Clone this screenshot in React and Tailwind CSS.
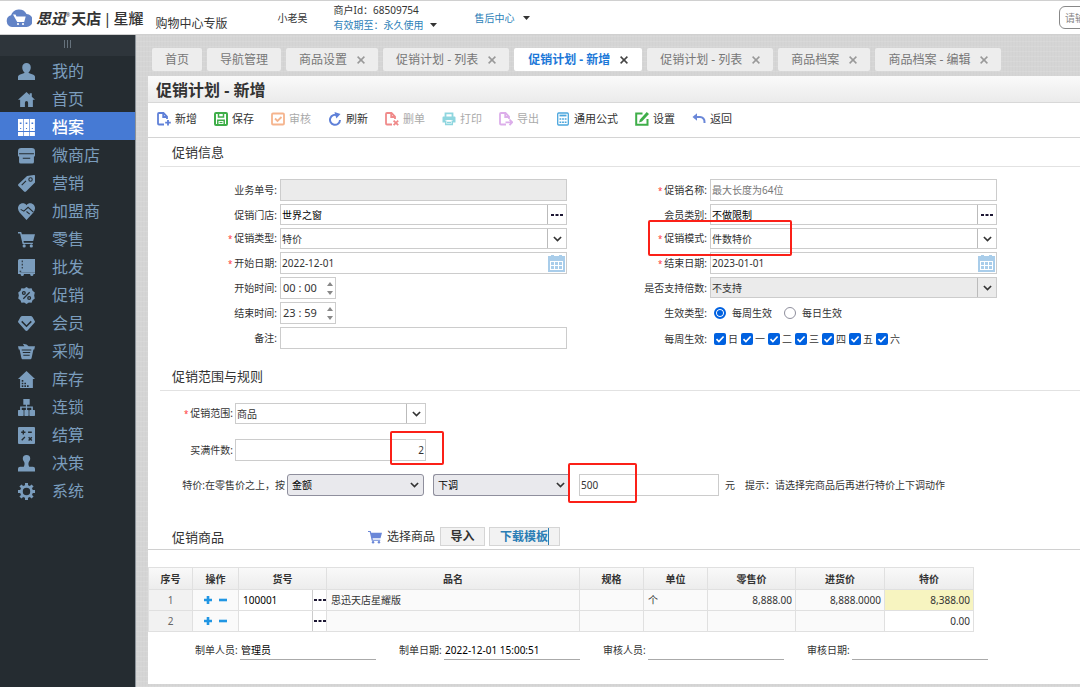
import React, { useId } from "react";

const Svg = ({ children, className = "size-[17px]", box = 16 }) => (
  <svg viewBox={`0 0 ${box} ${box}`} className={`shrink-0 ${className}`} fill="currentColor" aria-hidden="true">
    {children}
  </svg>
);

const dark = "#252c31";
const line = { fill: "none", stroke: dark, strokeWidth: 1 };

const navIcons = {
  user: (
    <path d="M8 0a4 4 0 0 1 4 4.200c0 2-.9 3.700-2 4.500v.8l4.500 1.600c1 .4 1.500 1.200 1.500 2.200V16H0v-2.700c0-1 .5-1.800 1.500-2.200L6 9.500v-.8C4.900 7.900 4 6.200 4 4.200A4 4 0 0 1 8 0z" />
  ),
  home: (
    <path d="M8 1 0 8.300h2V15h4.500v-4a1.500 1.500 0 0 1 3 0v4H14V8.300h2L13 5.500V2h-2v1.700z" />
  ),
  archive: (
    <>
      <path d="M0 0h4.900v11.300H0zM5.500 0h4.900v11.300H5.500zM11 0h4.900v11.300H11zM0 12.300h4.900V16H0zM5.500 12.300h4.900V16H5.500zM11 12.300h4.900V16H11z" />
      <path d="M1.700 4h1.600M7.200 4h1.600M12.700 4h1.600" stroke="#467ad4" strokeWidth="1.600" />
      <path d="M2 9h1M7.500 9h1M13 9h1" stroke="#467ad4" strokeWidth="1" />
    </>
  ),
  shop: (
    <>
      <path d="M3 1h10a3 3 0 0 1 3 3v2.500H0V4a3 3 0 0 1 3-3zM1 8h14v6a1.500 1.500 0 0 1-1.500 1.500h-11A1.500 1.500 0 0 1 1 14zM0 6h16v1.500a1.500 1.500 0 0 1-3 .5 2 2 0 0 1-3.300.5H6.300A2 2 0 0 1 3 8a1.500 1.500 0 0 1-3-.5z" />
      <path d="M1 6.300h14M4.500 10.500h7" {...line} />
    </>
  ),
  tag: (
    <>
      <path d="M8.500 1 15 0c.7 0 1 .3 1 1v6L7.500 15.500c-.6.6-1.200.6-1.800 0L.5 10.300c-.6-.6-.6-1.200 0-1.800z" />
      <circle cx="11.800" cy="4.200" r="1.600" {...line} />
      <path d="m3.500 9.500 4-4" {...line} />
    </>
  ),
  heart: (
    <>
      <path d="M8 2C9.500-.3 13-.5 15 1.800c1.600 2.200 1.200 5-.5 7.200L8 16 1.500 9C-.2 6.800-.6 4 1 1.800 3-.5 6.500-.3 8 2z" />
      <path d="m2.500 6 3 1.700L9.500 4l5 4.500M8 8l3 2.500" {...line} />
    </>
  ),
  cart: (
    <>
      <path d="M0 1h3l.7 2H16l-1.700 6.500H5.200l.3 1.500H14v1.300H4.300L2 2.400H0z" />
      <circle cx="5.800" cy="14" r="1.500" />
      <circle cx="12.500" cy="14" r="1.500" />
    </>
  ),
  book: (
    <>
      <path d="M1.500 0H16v13H2a2 2 0 0 0-1 .3H0V1.500A1.500 1.500 0 0 1 1.500 0zM0 13.200h16v1H0z" />
      <circle cx="4" cy="14.500" r="1.500" />
      <circle cx="13" cy="14.500" r="1.500" />
      <path d="M4 1.500V3M4 4.500V6M4 7.500V9M1.500 11.500H3" {...line} />
    </>
  ),
  percent: (
    <>
      <path d="m8 0 2.200 1.400 2.600-.2.900 2.400 2.100 1.500L15.200 8l.6 2.900-2.100 1.500-.9 2.400-2.600-.2L8 16l-2.200-1.400-2.600.2-.9-2.400L.2 10.900.8 8 .2 5.100l2.100-1.500.9-2.400 2.600.2z" />
      <g fill="none" stroke={dark} strokeWidth="1.200">
        <circle cx="5.500" cy="5.700" r="1.300" />
        <circle cx="10.500" cy="10.300" r="1.300" />
        <path d="m11 5-6 6" />
      </g>
    </>
  ),
  gem: (
    <>
      <path d="M4 1h8c.7 0 1.200.3 1.600.9L16 6c0 .5-.2.900-.5 1.200L9 14.500c-.6.6-1.400.6-2 0L.5 7.200A2 2 0 0 1 0 6l2.400-4.100C2.800 1.300 3.300 1 4 1z" />
      <path d="m3.500 6 4.500 4.500L12.500 6" fill="none" stroke={dark} strokeWidth="1.400" />
    </>
  ),
  basket: (
    <>
      <path d="M0 3h6L4.500.8l3.500.7L10 3h6l-.7 3h-.8l-1.700 8c-.2.800-.7 1.200-1.500 1.200H4.700c-.8 0-1.300-.4-1.500-1.200L1.500 6H.7z" />
      <path d="M3.500 6.500h9M4.500 9h7M5 11.500h6" {...line} />
    </>
  ),
  stock: (
    <>
      <path d="M8 0 0 7.500h2V16h12V7.500h2z" />
      <g fill={dark}>
        <path d="M3.500 8.500H5V10H3.500zM3.500 11H5v1.500H3.500zM3.500 13.500H5V15H3.500zM6 11h1.500v1.500H6zM6 13.500h1.500V15H6zM8.500 13.500H10V15H8.500z" />
      </g>
    </>
  ),
  chain: (
    <path d="M5 0h6v5.500H8.600V7H14v3.300h1.500c.3 0 .5.2.5.500V15c0 .6-.3 1-1 1h-3.500c-.5 0-.8-.3-.8-1v-4.200c0-.3.2-.5.500-.5h1.300V8.200H8.600v2.100h1c.3 0 .4.2.4.500V15c0 .7-.3 1-.8 1H6.800c-.5 0-.8-.3-.8-1v-4.200c0-.3.1-.5.400-.5h1V8.200H3.500v2.100h1.300c.3 0 .5.2.5.500V15c0 .7-.3 1-.8 1H1c-.7 0-1-.4-1-1v-4.200c0-.3.2-.5.500-.5H2V7h5.400V5.500H5z" />
  ),
  calc: (
    <>
      <rect width="16" height="16" rx="1" />
      <path d="M3 5h4M5 3v4M9.500 5H13M3.500 12.500l3-3M10 9.700l3 3M13 9.700l-3 3" fill="none" stroke={dark} strokeWidth="1.300" />
    </>
  ),
  stamp: (
    <path d="M8 0a3.500 3.500 0 0 1 3.500 3.500c0 1.500-1 2.300-1.500 3.500-.3 1-.2 2.500.5 4H14a2 2 0 0 1 2 2v2.500H0V13a2 2 0 0 1 2-2h3.500c.7-1.500.8-3 .5-4-.5-1.200-1.500-2-1.500-3.500A3.500 3.500 0 0 1 8 0z" />
  ),
  gear: (
    <>
      <circle cx="8" cy="8" r="4.800" fill="none" stroke="currentColor" strokeWidth="2.600" />
      <path d="M8 0v3M8 13v3M0 8h3M13 8h3M2.300 2.300l2 2M11.700 11.700l2 2M13.700 2.300l-2 2M4.300 11.700l-2 2" stroke="currentColor" strokeWidth="2.800" />
    </>
  ),
};

const nav = [
  ["user", "我的"],
  ["home", "首页"],
  ["archive", "档案"],
  ["shop", "微商店"],
  ["tag", "营销"],
  ["heart", "加盟商"],
  ["cart", "零售"],
  ["book", "批发"],
  ["percent", "促销"],
  ["gem", "会员"],
  ["basket", "采购"],
  ["stock", "库存"],
  ["chain", "连锁"],
  ["calc", "结算"],
  ["stamp", "决策"],
  ["gear", "系统"],
];

const tabs = [
  { label: "首页" },
  { label: "导航管理" },
  { label: "商品设置", close: true },
  { label: "促销计划 - 列表", close: true },
  { label: "促销计划 - 新增", close: true, active: true },
  { label: "促销计划 - 列表", close: true },
  { label: "商品档案", close: true },
  { label: "商品档案 - 编辑", close: true },
];

const stroke = { fill: "none", stroke: "currentColor", strokeWidth: 1.8 };
const page = <path d="M7 12.500H2a1 1 0 0 1-1-1V2a1 1 0 0 1 1-1h4.500L10 4.500V7M6.200 1v4H10" {...stroke} />;

const tools = [
  { label: "新增", tone: "text-[#5f80d8]", icon: <>{page}<path d="M11 8v5.500M8.200 10.700h5.600" {...stroke} /></> },
  {
    label: "保存",
    tone: "text-[#3fae49]",
    icon: (
      <>
        <rect x="1" y="1" width="12" height="12" rx="1" {...stroke} strokeWidth="2" />
        <path d="M4.500 1v4h5V1M3.800 13V8.300h6.400V13" {...stroke} strokeWidth="1.500" />
        <path d="M5.500 10.500h3" {...stroke} strokeWidth="1.200" />
      </>
    ),
  },
  {
    label: "审核",
    off: true,
    tone: "text-[#f5b48d]",
    icon: (
      <>
        <rect x="1" y="1.500" width="12" height="11" rx="1" {...stroke} />
        <path d="m4 6.500 2.500 2.500L10.500 5" {...stroke} />
      </>
    ),
  },
  {
    label: "刷新",
    tone: "text-[#5f80d8]",
    icon: (
      <>
        <path d="M9.500 3.500A5 5 0 1 0 12 8" {...stroke} strokeWidth="2" />
        <path d="M6.500 0 12.500 2 8.300 6.500z" />
      </>
    ),
  },
  { label: "删单", off: true, tone: "text-[#f08a8a]", icon: <>{page}<path d="m8.600 8.600 4.600 4.600M13.200 8.600l-4.600 4.600" {...stroke} /></> },
  {
    label: "打印",
    off: true,
    tone: "text-[#8fd6df]",
    icon: (
      <>
        <path d="M3.500 5V1.300h7V5" {...stroke} />
        <path d="M1.500 4.500h11a1 1 0 0 1 1 1V10.500h-2.700V8H3.200v2.500H.5v-5a1 1 0 0 1 1-1z" />
        <path d="M3.700 8.500v4h6.600v-4M5 10.500h4" {...stroke} strokeWidth="1.500" />
      </>
    ),
  },
  { label: "导出", off: true, tone: "text-[#dcaeea]", icon: <>{page}<path d="M6.500 10.300H13M10.500 7.500l2.700 2.800-2.700 2.800" {...stroke} /></> },
  {
    label: "通用公式",
    tone: "text-[#4ba6dd]",
    icon: (
      <>
        <rect x="1.700" y="1" width="10.600" height="12" rx="1" {...stroke} strokeWidth="1.300" />
        <path d="M3.500 3.500h7" {...stroke} />
        <path d="M3.500 6.200h1.800v1.500H3.500zM6.100 6.200h1.800v1.500H6.100zM8.700 6.200h1.800v1.500H8.700zM3.500 9.500h1.800V11H3.500zM6.100 9.500h1.800V11H6.100zM8.700 9.500h1.800V11H8.700z" />
      </>
    ),
  },
  {
    label: "设置",
    tone: "text-[#3fae49]",
    icon: (
      <>
        <path d="M7.500 1.500H1.200v11.300H12.500V7" {...stroke} strokeWidth="2" />
        <path d="m11.700 0 2.300 2-7 7.500-3 1 1-3z" />
      </>
    ),
  },
  {
    label: "返回",
    tone: "text-[#6a87d8]",
    icon: (
      <>
        <path d="M4 5h4a4.500 4.500 0 0 1 4.500 5v1" {...stroke} strokeWidth="2" />
        <path d="M5 1.200v7.600L.5 5z" />
      </>
    ),
  },
];

const Chevron = () => (
  <svg viewBox="0 0 10 6" className="h-[6px] w-[9px]" fill="none" stroke="#333" strokeWidth="1.800" aria-hidden="true">
    <path d="m1 .8 4 4 4-4" />
  </svg>
);

const Dots = () => (
  <svg viewBox="0 0 12 2" className="h-[2px] w-[12px]" fill="#1c1733" aria-hidden="true">
    <path d="M0 0h3v2H0zM4.500 0h3v2h-3zM9 0h3v2H9z" />
  </svg>
);

const Calendar = () => (
  <svg viewBox="0 0 17 17" className="size-[17px]" fill="none" aria-hidden="true">
    <path d="M0 1h3V0h3v1h5V0h3v1h3v16H0z" fill="#a9cdea" />
    <path d="M2 6h13v9H2z" fill="#fff" />
    <path d="M3 7h3v3H3zM7 7h3v3H7zM11 7h3v3h-3zM3 11h3v3H3zM7 11h3v3H7zM11 11h3v3h-3z" fill="#a9cdea" />
  </svg>
);

const Star = () => <span className="mr-[2px] text-[8px] text-[#f33]">*</span>;

const Mark = ({ className }) => (
  <span className={`pointer-events-none absolute z-10 rounded-[2px] border-2 border-[#fb2018] ${className}`} />
);

const box = "flex border border-[#ccc] bg-white";
const bare = "w-full min-w-0 flex-1 appearance-none bg-transparent px-px outline-none";

function Row({ label, required, height = "h-[22px]", children, id, mark }) {
  return (
    <div className={`relative flex items-center ${height}`}>
      <label htmlFor={id} className="w-[132px] shrink-0 pr-[3px] text-right">
        {required && <Star />}
        {label}:
      </label>
      <div className="flex h-full min-w-0 flex-1 items-center">{children}</div>
      {mark}
    </div>
  );
}

function TextRow({ label, required, disabled, placeholder }) {
  const id = useId();
  return (
    <Row label={label} required={required} id={id}>
      <input
        id={id}
        disabled={disabled}
        placeholder={placeholder}
        className="h-full w-full border border-[#ccc] bg-white px-px outline-none placeholder:text-[#777] disabled:bg-[#ebebeb]"
      />
    </Row>
  );
}

function PickRow({ label, value }) {
  const id = useId();
  return (
    <Row label={label} id={id} height="h-[21px]">
      <div className={`${box} h-full w-full`}>
        <input id={id} defaultValue={value} className={`${bare} text-black`} />
        <button type="button" aria-label={`选择${label}`} className="grid w-[19px] place-items-center border-l border-[#bbb]">
          <Dots />
        </button>
      </div>
    </Row>
  );
}

function Combo({ id, value, disabled }) {
  return (
    <div className={`flex h-full w-full border border-[#ccc] ${disabled ? "bg-[#ebebeb]" : "bg-white"}`}>
      <select id={id} disabled={disabled} className={`${bare} opacity-100`}>
        <option>{value}</option>
      </select>
      <span className="grid w-[19px] place-items-center border-l border-[#bbb]">
        <Chevron />
      </span>
    </div>
  );
}

function ComboRow({ label, value, required, disabled, mark }) {
  const id = useId();
  return (
    <Row label={label} required={required} id={id} height="h-[21px]" mark={mark}>
      <Combo id={id} value={value} disabled={disabled} />
    </Row>
  );
}

function DateRow({ label, value }) {
  const id = useId();
  return (
    <Row label={label} required id={id}>
      <div className={`${box} h-full w-full items-center`}>
        <input id={id} defaultValue={value} className={bare} />
        <button type="button" aria-label={`选择${label}`} className="grid w-[19px] place-items-center">
          <Calendar />
        </button>
      </div>
    </Row>
  );
}

function TimeRow({ label, value }) {
  const id = useId();
  return (
    <Row label={label} id={id}>
      <div className={`${box} h-full w-[56px]`}>
        <input id={id} defaultValue={value} className="w-[44px] bg-transparent pl-[2px] text-[11px] outline-none" />
        <span className="flex w-[10px] flex-col items-center justify-center gap-[5px] text-[#888]">
          <button type="button" aria-label="增加" className="grid h-1 place-items-center">
            <svg viewBox="0 0 6 4" className="h-[4px] w-[6px]" fill="currentColor"><path d="M0 4h6L3 0z" /></svg>
          </button>
          <button type="button" aria-label="减少" className="grid h-1 place-items-center">
            <svg viewBox="0 0 6 4" className="h-[4px] w-[6px]" fill="currentColor"><path d="M0 0h6L3 4z" /></svg>
          </button>
        </span>
      </div>
    </Row>
  );
}

const SectionTitle = ({ children }) => (
  <h2 className="ml-3 flex h-[29px] items-center border-b border-[#e2e2e2] pl-3 text-[13px]">{children}</h2>
);

const Caret = () => (
  <svg viewBox="0 0 7 4" className="h-[4px] w-[7px]" fill="#333" aria-hidden="true"><path d="M0 0h7L3.500 4z" /></svg>
);

function Header() {
  return (
    <header className="flex h-[35px] items-center overflow-hidden border-t border-b border-[#d0d0d0] bg-white">
      <a href="#" className="ml-[6px] flex items-center text-[15px] text-[#333]">
        <svg viewBox="0 0 26 18" className="h-[18px] w-[26px]" aria-hidden="true">
          <path d="M6 18A6 6 0 0 1 5 6.300 8.500 8.500 0 0 1 20.500 5 6.500 6.500 0 0 1 20 18z" fill="#6283c6" />
          <path d="M7 5.500h2.500l1 2h9.200l-1.500 5.500h-7z" fill="#fff" />
          <circle cx="12" cy="15" r="1.100" fill="#fff" />
          <circle cx="17" cy="15" r="1.100" fill="#fff" />
        </svg>
        <b className="ml-1 italic">思迅</b>
        <sup className="text-[5px]">®</sup>
        <b className="ml-px">天店</b>
        <span className="mx-[2px]">|</span>
        <span className="font-medium">星耀</span>
      </a>
      <span className="mt-3 ml-[12px] text-[12px]">购物中心专版</span>
      <span className="ml-[50px]">小老吴</span>
      <div className="ml-[26px] leading-[15px]">
        <div>商户Id：68509754</div>
        <button type="button" className="flex items-center gap-[6px] text-[#2d7fb8]">
          有效期至：永久使用 <Caret />
        </button>
      </div>
      <button type="button" className="ml-[38px] flex items-center gap-2 text-[#2d7fb8]">
        售后中心 <Caret />
      </button>
      <div className="flex-1" />
      <div className="w-[21px] overflow-hidden">
        <input
          aria-label="搜索"
          placeholder="请输入"
          className="h-[23px] w-40 rounded-[6px] border border-[#888] px-[5px] outline-none placeholder:text-[#888]"
        />
      </div>
    </header>
  );
}

function Sidebar() {
  return (
    <aside className="w-[136px] shrink-0 border-r border-[#8b9299] bg-[#252c31] text-[#7b9dbd]">
      <button type="button" aria-label="收起菜单" className="flex h-[21px] w-full items-center justify-center gap-[2px] bg-[#2e353b] pb-1">
        <i className="h-2 w-px bg-[#66727c]" />
        <i className="h-2 w-px bg-[#66727c]" />
        <i className="h-2 w-px bg-[#66727c]" />
      </button>
      <nav>
        {nav.map(([icon, label]) => (
          <a
            key={icon}
            href="#"
            className={`flex h-7 items-center gap-[17px] pt-[2px] pl-[18px] text-[16px] ${icon === "archive" ? "bg-[#467ad4] font-medium text-white" : ""}`}
          >
            <Svg>{navIcons[icon]}</Svg>
            {label}
          </a>
        ))}
      </nav>
    </aside>
  );
}

function Tabs() {
  return (
    <div className="mb-[5px] ml-1 flex gap-[5px] text-[12px]">
      {tabs.map((t, i) => (
        <div
          key={i}
          className={`flex h-[23px] shrink-0 items-center gap-[10px] rounded-[2px] ${
            t.active ? "bg-white px-[14px] font-bold text-[#1c78d8]" : "bg-[#ededed] px-[13px] text-[#777]"
          }`}
        >
          <button type="button">{t.label}</button>
          {t.close && (
            <button type="button" aria-label="关闭">
              <svg viewBox="0 0 8 8" className={`mt-px size-[8px] ${t.active ? "text-[#444]" : "text-[#999]"}`} fill="none" stroke="currentColor" strokeWidth="1.500">
                <path d="m.6.6 6.800 6.800M7.400.6.6 7.400" />
              </svg>
            </button>
          )}
        </div>
      ))}
    </div>
  );
}

function Info() {
  return (
    <div className="grid max-w-[860px] grid-cols-2 pt-3">
      <div className="flex flex-col gap-[3px] pr-[11px]">
        <TextRow label="业务单号" disabled />
        <PickRow label="促销门店" value="世界之窗" />
        <ComboRow label="促销类型" value="特价" required />
        <DateRow label="开始日期" value="2022-12-01" />
        <TimeRow label="开始时间" value="00 : 00" />
        <TimeRow label="结束时间" value="23 : 59" />
        <TextRow label="备注" />
      </div>
      <div className="flex flex-col gap-[3px] pr-[11px]">
        <TextRow label="促销名称" required placeholder="最大长度为64位" />
        <PickRow label="会员类别" value="不做限制" />
        <ComboRow
          label="促销模式"
          value="件数特价"
          required
          mark={<Mark className="-top-2 left-[70px] h-[36px] w-[144px]" />}
        />
        <DateRow label="结束日期" value="2023-01-01" />
        <ComboRow label="是否支持倍数" value="不支持" disabled />
        <Row label="生效类型" height="h-6">
          {["每周生效", "每日生效"].map((t, i) => (
            <label key={t} className="mr-2 ml-1 flex items-center gap-[6px]">
              <input
                type="radio"
                name="effect"
                defaultChecked={i === 0}
                className="size-3 appearance-none rounded-full border border-[#8f8f9d] bg-white checked:border-2 checked:border-[#0061e0] checked:bg-[#0061e0] checked:shadow-[inset_0_0_0_1px_white]"
              />
              {t}
            </label>
          ))}
        </Row>
        <Row label="每周生效">
          <div className="ml-1 flex gap-[3px]">
            {["日", "一", "二", "三", "四", "五", "六"].map((d) => (
              <label key={d} className="flex items-center gap-[2px]">
                <span className="grid size-3">
                  <input type="checkbox" defaultChecked className="col-start-1 row-start-1 size-3 appearance-none rounded-[2px] bg-[#0061e0]" />
                  <svg viewBox="0 0 11 11" className="pointer-events-none col-start-1 row-start-1 size-3" fill="none" stroke="#fff" strokeWidth="1.500" aria-hidden="true">
                    <path d="M2.300 5.600 4.500 7.800 8.800 3.200" />
                  </svg>
                </span>
                {d}
              </label>
            ))}
          </div>
        </Row>
      </div>
    </div>
  );
}

function GreySelect({ id, label, value, className }) {
  return (
    <div className={`flex h-[22px] items-center rounded-[3px] border border-[#8f8f9d] bg-[#e9e9ed] pr-1 text-black ${className}`}>
      <select id={id} aria-label={label} className="min-w-0 flex-1 appearance-none bg-transparent pl-1 outline-none">
        <option>{value}</option>
      </select>
      <Chevron />
    </div>
  );
}

function Rules() {
  return (
    <div className="pt-3">
      <div className="flex h-[21px] items-center">
        <label htmlFor="scope" className="w-[87px] pr-[2px] text-right"><Star />促销范围:</label>
        <div className="h-full w-[191px]"><Combo id="scope" value="商品" /></div>
      </div>
      <div className="mt-[15px] flex h-[22px] items-center">
        <label htmlFor="qty" className="w-[87px] pr-[2px] text-right">买满件数:</label>
        <div className="relative h-full w-[191px]">
          <input id="qty" defaultValue="2" className="h-full w-full border border-[#ccc] pr-px text-right outline-none" />
          <Mark className="-top-2 left-[155px] h-[34px] w-[54px]" />
        </div>
      </div>
      <div className="mt-[13px] flex items-center">
        <label htmlFor="by" className="w-[139px] pr-[2px] text-right">特价:在零售价之上，按</label>
        <GreySelect id="by" value="金额" className="w-[137px]" />
        <GreySelect label="调整方向" value="下调" className="ml-[9px] w-[136px] rounded-r-none border-r-0" />
        <div className="relative ml-[10px] h-[22px] w-[140px]">
          <input aria-label="调整金额" defaultValue="500" className="h-full w-full border border-[#ccc] px-px outline-none" />
          <Mark className="-top-[11px] -left-[11px] h-[40px] w-[69px]" />
        </div>
        <span className="ml-[6px]">元</span>
        <span className="ml-[10px]">提示：请选择完商品后再进行特价上下调动作</span>
      </div>
    </div>
  );
}

const head = ["序号", "操作", "货号", "品名", "规格", "单位", "零售价", "进货价", "特价"];
const goods = [
  { code: "100001", name: "思迅天店星耀版", unit: "个", price: "8,888.00", cost: "8,888.0000", sale: "8,388.00" },
  { code: "", name: "", unit: "", price: "", cost: "", sale: "0.00" },
];

function Goods() {
  return (
    <table className="w-[825px] table-fixed border-collapse bg-[#fafafa] [&_td]:border [&_td]:border-[#e0e0e0] [&_th]:border [&_th]:border-[#e0e0e0]">
      <colgroup>
        <col className="w-[44px]" />
        <col className="w-[46px]" />
        <col className="w-[88px]" />
        <col className="w-[253px]" />
        <col className="w-[64px]" />
        <col className="w-[64px]" />
        <col className="w-[88px]" />
        <col className="w-[89px]" />
        <col className="w-[89px]" />
      </colgroup>
      <thead>
        <tr className="h-[22px] bg-linear-to-b from-[#f9f9f9] to-[#ececec]">
          {head.map((h) => <th key={h} scope="col" className="font-bold">{h}</th>)}
        </tr>
      </thead>
      <tbody>
        {goods.map((g, i) => (
          <tr key={i} className="h-[21px]">
            <td className="bg-[#f2f2f2] text-center text-[#666]">{i + 1}</td>
            <td>
              <div className="flex justify-center gap-[7px] text-[#2196e3]">
                <button type="button" aria-label="添加行">
                  <svg viewBox="0 0 8 8" className="size-[8px]" fill="currentColor"><path d="M2.700 0h2.600v2.700H8v2.600H5.300V8H2.700V5.300H0V2.700h2.700z" /></svg>
                </button>
                <button type="button" aria-label="删除行">
                  <svg viewBox="0 0 8 8" className="size-[8px]" fill="currentColor"><path d="M0 2.700h8v2.600H0z" /></svg>
                </button>
              </div>
            </td>
            <td className="bg-white p-0">
              <div className="flex h-5">
                <input aria-label="货号" defaultValue={g.code} className="min-w-0 flex-1 bg-transparent pl-1 text-black outline-none" />
                <button type="button" aria-label="选择货号" className="grid w-[14px] place-items-center border-l border-[#ccc]"><Dots /></button>
              </div>
            </td>
            <td className="pl-1">{g.name}</td>
            <td />
            <td className="pl-1">{g.unit}</td>
            <td className="pr-[3px] text-right">{g.price}</td>
            <td className="pr-[3px] text-right">{g.cost}</td>
            <td className={`pr-[3px] text-right ${i === 0 ? "bg-[#f7f4c0]" : "bg-white"}`}>{g.sale}</td>
          </tr>
        ))}
      </tbody>
    </table>
  );
}

export default function App() {
  return (
    <div className="flex min-h-screen flex-col overflow-x-hidden font-['Noto_Sans','Noto_Sans_CJK_SC',sans-serif] text-[10px] leading-[16px] whitespace-nowrap text-[#333]">
      <Header />
      <div className="flex flex-1">
        <Sidebar />
        <main className="min-w-0 flex-1 bg-[#d5d5d5] bg-[repeating-linear-gradient(0deg,rgba(255,255,255,0.1)_0px,rgba(255,255,255,0.1)_1px,transparent_1px,transparent_5px),repeating-linear-gradient(90deg,rgba(0,0,0,0.01)_0px,rgba(0,0,0,0.01)_1px,transparent_1px,transparent_3px)] pt-[13px] pb-[3px] pl-3">
          <Tabs />
          <section className="bg-white pb-6">
            <h1 className="flex h-[27px] items-center border-b border-[#d8d8d8] bg-linear-to-b from-[#fafafa] to-[#ebebeb] pt-px pl-2 text-[16px] font-bold">
              促销计划 - 新增
            </h1>
            <div className="flex h-[35px] items-center gap-[17px] border-b border-[#d4d4d4] pb-[2px] pl-[9px] text-[11px]">
              {tools.map((t) => (
                <button key={t.label} type="button" disabled={t.off} className={`flex items-center gap-1 ${t.off ? "text-[#aaa]" : ""}`}>
                  <Svg box={14} className={`size-[14px] ${t.tone}`}>{t.icon}</Svg>
                  {t.label}
                </button>
              ))}
            </div>
            <SectionTitle>促销信息</SectionTitle>
            <Info />
            <div className="mt-3"><SectionTitle>促销范围与规则</SectionTitle></div>
            <Rules />
            <div className="mt-[25px] flex h-[29px] items-center border-b border-[#d0d0d0] pt-[3px] pl-6">
              <h2 className="w-[196px] text-[13px]">促销商品</h2>
              <button type="button" className="flex items-center gap-[5px] text-[12px]">
                <Svg box={16} className="size-[14px] text-[#6a87d8]">
                  <path d="M0 1h3l.7 2H16l-1.700 6.500H5.200l.3 1.500H14v1.300H4.300L2 2.400H0z" />
                  <circle cx="5.800" cy="14" r="1.400" />
                  <circle cx="12.500" cy="14" r="1.400" />
                </Svg>
                选择商品
              </button>
              <button type="button" className="ml-[5px] h-[19px] w-[45px] border border-[#d5d5d5] bg-[#f2f2f2] text-[12px] leading-[17px] font-bold">导入</button>
              <button type="button" className="ml-1 flex h-[19px] w-[71px] items-center justify-center border border-[#d5d5d5] bg-[#f2f2f2] text-[12px] leading-[17px] font-bold text-[#2a7db5]">
                <span className="border-r border-[#2a7db5]">下载模板</span>
              </button>
            </div>
            <div className="pt-[17px]"><Goods /></div>
            <div className="mt-2 flex gap-[23px] pl-[47px]">
              {[
                ["制单人员", "管理员"],
                ["制单日期", "2022-12-01 15:00:51"],
                ["审核人员", ""],
                ["审核日期", ""],
              ].map(([k, v]) => (
                <label key={k} className="flex h-5 items-center">
                  <span className="w-[45px]">{k}:</span>
                  <input readOnly defaultValue={v} className="h-5 w-[136px] border-b border-[#aaa] px-px text-black outline-none" />
                </label>
              ))}
            </div>
          </section>
        </main>
      </div>
    </div>
  );
}
